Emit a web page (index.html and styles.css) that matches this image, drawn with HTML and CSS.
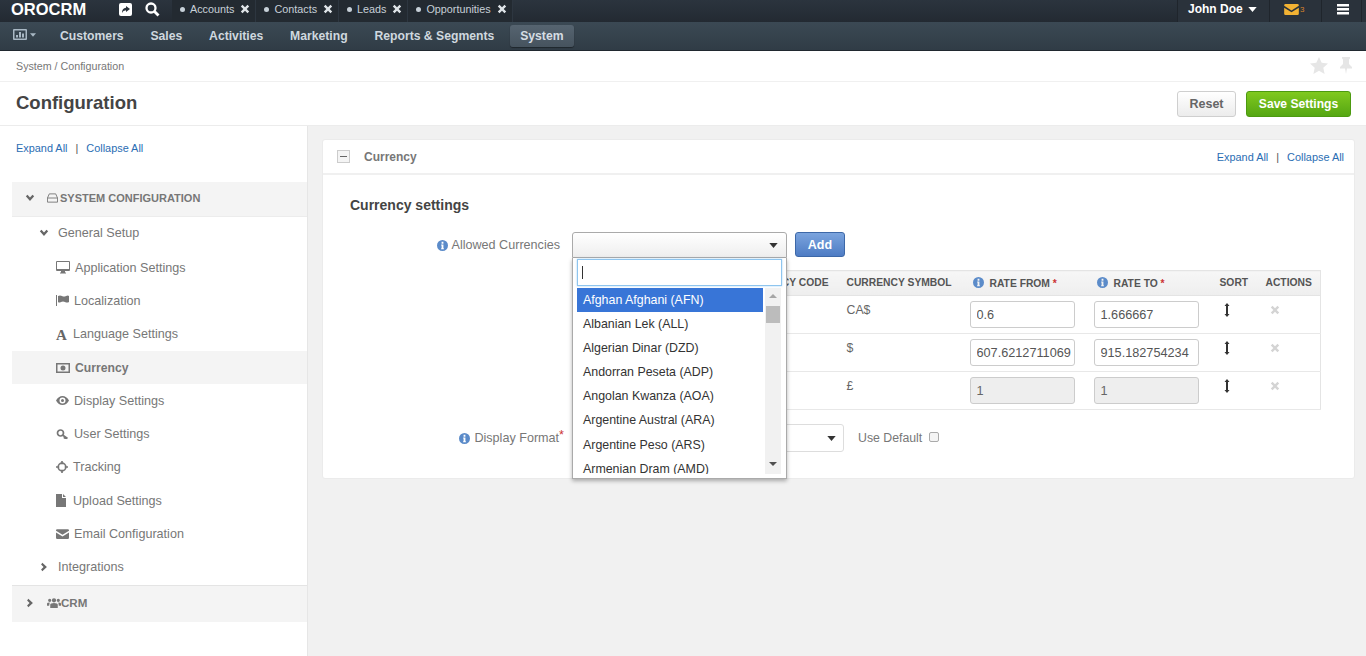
FILE: index.html
```html
<!DOCTYPE html>
<html lang="en">
  <head>
    <meta charset="UTF-8" />
    <meta name="viewport" content="width=device-width, initial-scale=1.0" />
    <title>Configuration</title>
    <link rel="stylesheet" href="styles.css">
  </head>
  <body>
    <svg class="sprite" width="0" height="0">
      <symbol id="i-x" viewBox="0 0 12 12"><path d="M3 1 6 4 9 1 11 3 8 6 11 9 9 11 6 8 3 11 1 9 4 6 1 3Z"/></symbol>
      <symbol id="i-caret" viewBox="0 0 10 6"><path d="M0 0H10L5 6Z"/></symbol>
      <symbol id="i-down" viewBox="0 0 12 12"><path d="M1 4 3 2 6 5.500 9 2 11 4 6 9.500Z"/></symbol>
      <symbol id="i-right" viewBox="0 0 12 12"><path d="M4 1 2.500 3 5.500 6 2.500 9 4 11 9.500 6Z"/></symbol>
      <symbol id="i-envelope" viewBox="0 0 16 12"><path d="M0 1.500Q0 0 1.500 0H14.500Q16 0 16 1.500V2L8 7 0 2ZM0 4 8 9 16 4V10.500Q16 12 14.500 12H1.500Q0 12 0 10.500Z"/></symbol>
      <symbol id="i-info" viewBox="0 0 12 12"><path fill-rule="evenodd" d="M6 0A6 6 0 1 1 6 12 6 6 0 0 1 6 0ZM5 2V4H7V2ZM4.500 5V6H5V9H4.500V10H7.500V9H7V5Z"/></symbol>
      <symbol id="i-sort" viewBox="0 0 6 14"><path d="M3 0 5.500 3H4V11H5.500L3 14 .5 11H2V3H.5Z"/></symbol>
    </svg>

    <header class="topbar">
      <a class="logo">OROCRM</a>
      <div class="quick-icons">
        <svg width="13" height="13" viewBox="0 0 13 13"><path fill="#fff" d="M2 0H11Q13 0 13 2V11Q13 13 11 13H2Q0 13 0 11V2Q0 0 2 0Z"/><path fill="#2a323b" d="M7 3 11 6 7 9V7.300Q4 7.300 3 10 3 5 7 4.700Z"/></svg>
        <svg width="15" height="15" viewBox="0 0 15 15"><circle cx="6" cy="6" r="4.500" fill="none" stroke="#fff" stroke-width="2.300"/><path d="M9.500 9.500 13.500 13.500" stroke="#fff" stroke-width="2.800"/></svg>
      </div>
      <ul class="tabs">
        <li class="tab"><span class="tab-dot"></span>Accounts<svg class="tab-x"><use href="#i-x"/></svg></li>
        <li class="tab"><span class="tab-dot"></span>Contacts<svg class="tab-x"><use href="#i-x"/></svg></li>
        <li class="tab"><span class="tab-dot"></span>Leads<svg class="tab-x"><use href="#i-x"/></svg></li>
        <li class="tab"><span class="tab-dot"></span>Opportunities<svg class="tab-x"><use href="#i-x"/></svg></li>
      </ul>
      <div class="user-area">
        <div class="user-cell user-name">John Doe<svg class="user-caret"><use href="#i-caret"/></svg></div>
        <div class="user-cell user-mail">
          <svg class="mail-icon"><use href="#i-envelope"/></svg><span class="mail-count">3</span>
        </div>
        <div class="user-cell user-menu">
          <svg width="12" height="11" viewBox="0 0 12 11"><path fill="#fff" d="M0 0H12V2.500H0ZM0 4H12V6.500H0ZM0 8H12V10.500H0Z"/></svg>
        </div>
      </div>
    </header>

    <nav class="mainnav">
      <div class="nav-dash">
        <svg width="14" height="11" viewBox="0 0 14 11"><path fill="#a9b8c4" fill-rule="evenodd" d="M1 0H13Q14 0 14 1V10Q14 11 13 11H1Q0 11 0 10V1Q0 0 1 0ZM1.500 1.500V9.500H12.500V1.500ZM3 6H5V8.500H3ZM6 3H8V8.500H6ZM9 4.500H11V8.500H9Z"/></svg>
        <svg class="nav-caret"><use href="#i-caret"/></svg>
      </div>
      <a class="nav-item">Customers</a>
      <a class="nav-item">Sales</a>
      <a class="nav-item">Activities</a>
      <a class="nav-item">Marketing</a>
      <a class="nav-item">Reports &amp; Segments</a>
      <a class="nav-item active">System</a>
    </nav>

    <div class="breadcrumb-bar">
      <div class="breadcrumb">System / Configuration</div>
      <div class="page-tools">
        <svg width="18" height="17" viewBox="0 0 18 17"><path fill="#e6e6e6" d="M9 0 11.700 5.800 18 6.500 13.300 10.800 14.600 17 9 13.800 3.400 17 4.700 10.800 0 6.500 6.300 5.800Z"/></svg>
        <svg width="12" height="17" viewBox="0 0 12 17"><path fill="#e6e6e6" d="M2 0H10V1.500L9 2.500V7L12 10V11.500H7L6 17 5 11.500H0V10L3 7V2.500L2 1.500Z"/></svg>
      </div>
    </div>

    <div class="title-bar">
      <h1 class="page-title">Configuration</h1>
      <div class="title-actions">
        <button class="btn btn-reset">Reset</button>
        <button class="btn btn-save">Save Settings</button>
      </div>
    </div>

    <div class="content">
      <aside class="sidebar">
        <div class="expand-links side-links"><a>Expand All</a><span class="sep">|</span><a>Collapse All</a></div>
        <div class="tree">
          <div class="tree-section open">
            <svg class="chev"><use href="#i-down"/></svg>
            <svg class="sec-icon" viewBox="0 0 12 10"><path fill="none" stroke="#777" d="M2.500 .5H9.500L11.500 5V9.500H.5V5ZM.5 5H11.500"/></svg>
            SYSTEM CONFIGURATION
          </div>
          <div class="tree-group first"><svg class="chev"><use href="#i-down"/></svg>General Setup</div>
          <div class="tree-item">
            <svg class="item-icon" width="14" height="13" viewBox="0 0 14 13"><path fill="#777" fill-rule="evenodd" d="M1 0H13Q14 0 14 1V9Q14 10 13 10H9V11.500H10V12.500H4V11.500H5V10H1Q0 10 0 9V1Q0 0 1 0ZM1 1V8H13V1Z"/></svg>
            Application Settings
          </div>
          <div class="tree-item">
            <svg class="item-icon" width="13" height="11" viewBox="0 0 13 11"><path fill="#777" d="M0 0H1V11H0ZM2 1Q4 0 6 1T10 1 13 1V7Q11 8 9 7T5 7 2 7Z"/></svg>
            Localization
          </div>
          <div class="tree-item">
            <span class="item-letter">A</span>
            Language Settings
          </div>
          <div class="tree-item active">
            <svg class="item-icon" width="14" height="10" viewBox="0 0 14 10"><path fill="#777" fill-rule="evenodd" d="M0 0H14V10H0ZM1.500 1.500V8.500H12.500V1.500ZM7 2.500A2.500 2.500 0 1 1 7 7.500 2.500 2.500 0 0 1 7 2.500Z"/></svg>
            Currency
          </div>
          <div class="tree-item">
            <svg class="item-icon" width="13" height="9" viewBox="0 0 13 9"><path fill="#777" fill-rule="evenodd" d="M6.500 0Q10.500 0 13 4.500 10.500 9 6.500 9T0 4.500Q2.500 0 6.500 0ZM6.500 1.500A3 3 0 1 0 6.500 7.500 3 3 0 0 0 6.500 1.500ZM6.500 3A1.500 1.500 0 1 1 6.500 6 1.500 1.500 0 0 1 6.500 3Z"/></svg>
            Display Settings
          </div>
          <div class="tree-item">
            <svg class="item-icon" width="13" height="11" viewBox="0 0 12 11"><path fill="none" stroke="#777" stroke-width="1.700" d="M4 1A3 3 0 1 1 4 7 3 3 0 0 1 4 1ZM6 6 11 9.500M8.500 7.800 7.500 9.500"/></svg>
            User Settings
          </div>
          <div class="tree-item">
            <svg class="item-icon" width="12" height="12" viewBox="0 0 11 11"><circle cx="5.500" cy="5.500" r="3.500" fill="none" stroke="#777" stroke-width="1.500"/><path stroke="#777" stroke-width="1.500" d="M5.500 0V3M5.500 8V11M0 5.500H3M8 5.500H11"/></svg>
            Tracking
          </div>
          <div class="tree-item">
            <svg class="item-icon file-icon" width="10" height="13" viewBox="0 0 10 13"><path fill="#777" d="M0 0H6V4H10V13H0ZM7 0 10 3H7Z"/></svg>
            Upload Settings
          </div>
          <div class="tree-item">
            <svg class="item-icon" width="13" height="10"><use href="#i-envelope" fill="#777"/></svg>
            Email Configuration
          </div>
          <div class="tree-group last"><svg class="chev"><use href="#i-right"/></svg>Integrations</div>
          <div class="tree-section">
            <svg class="chev"><use href="#i-right"/></svg>
            <svg class="sec-icon crm-icon" viewBox="0 0 13 10"><path fill="#777" d="M6.500 1A2 2 0 1 1 6.500 5 2 2 0 0 1 6.500 1ZM2.500 1.500A1.500 1.500 0 1 1 2.500 4.500 1.500 1.500 0 0 1 2.500 1.500ZM10.500 1.500A1.500 1.500 0 1 1 10.500 4.500 1.500 1.500 0 0 1 10.500 1.500ZM3 10V7Q3 5.500 6.500 5.500T10 7V10ZM0 8V6Q0 5 2.500 5L2 8ZM13 8V6Q13 5 10.500 5L11 8Z"/></svg>
            <span class="crm-label">CRM</span>
          </div>
        </div>
      </aside>

      <main class="main">
        <section class="card">
          <div class="card-head">
            <span class="collapse-box"></span>
            <span class="card-title">Currency</span>
            <div class="expand-links"><a>Expand All</a><span class="sep">|</span><a>Collapse All</a></div>
          </div>
          <div class="card-body">
            <h2 class="form-title">Currency settings</h2>
            <div class="form-row">
              <label class="form-label"><svg class="info"><use href="#i-info"/></svg>Allowed Currencies</label>
              <div class="form-field">
                <div class="picker-line">
                  <div class="select open-select"><svg class="select-caret"><use href="#i-caret"/></svg></div>
                  <button class="btn btn-add">Add</button>
                </div>

                <div class="dropdown">
                  <div class="drop-search"><span class="text-cursor"></span></div>
                  <div class="drop-body">
                    <ul class="drop-list">
                      <li class="selected">Afghan Afghani (AFN)</li>
                      <li>Albanian Lek (ALL)</li>
                      <li>Algerian Dinar (DZD)</li>
                      <li>Andorran Peseta (ADP)</li>
                      <li>Angolan Kwanza (AOA)</li>
                      <li>Argentine Austral (ARA)</li>
                      <li>Argentine Peso (ARS)</li>
                      <li>Armenian Dram (AMD)</li>
                    </ul>
                    <div class="drop-scroll">
                      <span class="scroll-up"></span>
                      <span class="scroll-thumb"></span>
                      <span class="scroll-down"></span>
                    </div>
                  </div>
                </div>

                <table class="rates">
                  <colgroup>
                    <col class="col-code" /><col class="col-symbol" /><col class="col-rate" /><col class="col-rate" /><col class="col-sort" /><col />
                  </colgroup>
                  <thead>
                    <tr>
                      <th class="th-code">CURRENCY CODE</th>
                      <th>CURRENCY SYMBOL</th>
                      <th class="th-rate"><svg class="info"><use href="#i-info"/></svg>RATE FROM <em>*</em></th>
                      <th class="th-rate"><svg class="info"><use href="#i-info"/></svg>RATE TO <em>*</em></th>
                      <th>SORT</th>
                      <th>ACTIONS</th>
                    </tr>
                  </thead>
                  <tbody>
                    <tr>
                      <td></td>
                      <td class="td-text">CA$</td>
                      <td><input class="rate-input" value="0.6" /></td>
                      <td><input class="rate-input" value="1.666667" /></td>
                      <td class="td-text"><svg class="sort-icon"><use href="#i-sort"/></svg></td>
                      <td class="td-text"><svg class="remove-icon"><use href="#i-x"/></svg></td>
                    </tr>
                    <tr>
                      <td></td>
                      <td class="td-text">$</td>
                      <td><input class="rate-input" value="607.6212711069" /></td>
                      <td><input class="rate-input" value="915.182754234" /></td>
                      <td class="td-text"><svg class="sort-icon"><use href="#i-sort"/></svg></td>
                      <td class="td-text"><svg class="remove-icon"><use href="#i-x"/></svg></td>
                    </tr>
                    <tr>
                      <td></td>
                      <td class="td-text">£</td>
                      <td><input class="rate-input" value="1" disabled /></td>
                      <td><input class="rate-input" value="1" disabled /></td>
                      <td class="td-text"><svg class="sort-icon"><use href="#i-sort"/></svg></td>
                      <td class="td-text"><svg class="remove-icon"><use href="#i-x"/></svg></td>
                    </tr>
                  </tbody>
                </table>
              </div>
            </div>
            <div class="form-row format-row">
              <label class="form-label"><svg class="info"><use href="#i-info"/></svg>Display Format<em>*</em></label>
              <div class="form-field format-field">
                <div class="select format-select"><svg class="select-caret"><use href="#i-caret"/></svg></div>
                <span class="use-default">Use Default</span>
                <input type="checkbox" class="use-check" />
              </div>
            </div>
          </div>
        </section>
      </main>
    </div>
  </body>
</html>
```

FILE: styles.css
```css
* {
  box-sizing: border-box;
}
html,
body {
  height: 100%;
}
body {
  font-family: "Liberation Sans", Arial, sans-serif;
  font-size: 12px;
  color: #666;
  margin: 0;
  height: 656px;
  overflow: hidden;
  display: flex;
  flex-direction: column;
  background-color: #fff;
}
.sprite {
  position: absolute;
}
a {
  color: inherit;
  text-decoration: none;
}

/* top bar */
.topbar {
  height: 22px;
  flex: none;
  display: flex;
  align-items: stretch;
  background: linear-gradient(#2b343e, #232a32);
  color: #fff;
}
.logo {
  width: 87px;
  padding-left: 11px;
  font-size: 16.500px;
  font-weight: bold;
  line-height: 18px;
}
.quick-icons {
  width: 85px;
  display: flex;
  align-items: center;
  padding: 0 0 3px 32px;
  gap: 13px;
}
.tabs {
  list-style: none;
  margin: 0;
  padding: 0;
  display: flex;
}
.tab {
  display: flex;
  align-items: center;
  padding: 0 5px 4px 8px;
  font-size: 10.800px;
  color: #c7d0d8;
  background-color: #232a31;
  border-right: 1px solid #2d3640;
}
.tab-dot {
  width: 5px;
  height: 5px;
  margin-right: 5px;
  border-radius: 50%;
  background-color: #c7d0d8;
}
.tab-x {
  width: 10px;
  height: 10px;
  margin-left: 6px;
  fill: #dfe4e8;
}
.user-area {
  margin-left: auto;
  display: flex;
  padding-right: 4px;
  background-color: #2a323b;
}
.user-cell {
  display: flex;
  align-items: center;
  padding-bottom: 4px;
  border-left: 1px solid #1f252c;
}
.user-name {
  width: 92px;
  padding-left: 10px;
  font-weight: bold;
  font-size: 12px;
}
.user-caret {
  width: 9px;
  height: 5px;
  margin-left: 5px;
  fill: #fff;
}
.user-mail {
  width: 52px;
  padding-left: 14px;
}
.mail-icon {
  width: 15px;
  height: 11px;
  fill: #f2b233;
}
.mail-count {
  font-size: 8px;
  color: #d9822b;
  margin-left: 1px;
}
.user-menu {
  width: 41px;
  padding-left: 15px;
  border-right: 1px solid #1f252c;
}

/* main nav */
.mainnav {
  height: 29px;
  flex: none;
  display: flex;
  align-items: center;
  padding-left: 13px;
  background: linear-gradient(#3b4954, #303c46);
  border-bottom: 1px solid #20282f;
}
.nav-dash {
  width: 33.600px;
  display: flex;
  align-items: center;
  padding-bottom: 3px;
}
.nav-caret {
  width: 6px;
  height: 4px;
  margin-left: 3px;
  fill: #a9b8c4;
}
.nav-item {
  padding: 0 13.400px;
  height: 22px;
  line-height: 22px;
  margin-bottom: 1px;
  font-size: 12.200px;
  font-weight: bold;
  color: #cfd8df;
}
.nav-item.active {
  margin-left: 2.500px;
  padding: 0 10px;
  color: #d6dde3;
  border-radius: 3px;
  background: linear-gradient(#566470, #46535e);
  box-shadow: 0 1px 1px #1f262c;
}

/* breadcrumbs and title */
.breadcrumb-bar {
  height: 31px;
  flex: none;
  display: flex;
  justify-content: space-between;
  align-items: center;
  padding: 0 14px 0 16px;
  border-bottom: 1px solid #f0f0f0;
}
.breadcrumb {
  font-size: 10.700px;
  color: #777;
}
.page-tools {
  display: flex;
  gap: 12px;
  padding-bottom: 2px;
}
.title-bar {
  height: 44px;
  flex: none;
  display: flex;
  justify-content: space-between;
  align-items: center;
  padding: 0 15px 0 16px;
  border-bottom: 1px solid #ececec;
}
.page-title {
  margin: 0 0 1px;
  font-size: 18.500px;
  color: #444;
}
.title-actions {
  display: flex;
  gap: 10px;
}
.btn {
  height: 26px;
  font-family: inherit;
  font-size: 12.500px;
  font-weight: bold;
  border-radius: 3px;
  padding: 0;
}
.btn-reset {
  width: 59px;
  color: #666;
  border: 1px solid #cfcfcf;
  background: linear-gradient(#fff, #ececec);
}
.btn-save {
  width: 105px;
  font-size: 12.100px;
  color: #fff;
  border: 1px solid #4c9a10;
  background: linear-gradient(#80c91f, #55a613);
}

/* sidebar */
.content {
  flex: 1;
  display: flex;
  min-height: 0;
}
.sidebar {
  width: 308px;
  flex: none;
  padding-left: 12px;
  border-right: 1px solid #e6e6e6;
  background-color: #fff;
}
.expand-links {
  font-size: 10.900px;
  color: #2a6db3;
}
.side-links {
  height: 56px;
  padding: 16px 0 0 4px;
}
.sep {
  margin: 0 8px;
  color: #555;
}
.tree-section {
  height: 36px;
  display: flex;
  align-items: center;
  padding: 0 0 2px 13px;
  font-weight: bold;
  font-size: 11px;
  color: #777;
  background-color: #f4f4f4;
}
.tree-section.open {
  border-bottom: 1px solid #ececec;
  height: 35px;
}
.tree-section .chev {
  margin-right: 12px;
}
.sec-icon {
  width: 11px;
  height: 10px;
  margin-right: 2px;
}
.crm-icon {
  width: 14px;
  height: 11px;
  margin-right: 0;
}
.crm-label {
  font-size: 11.600px;
}
.chev {
  width: 10px;
  height: 10px;
  flex: none;
  fill: #666;
}
.tree-group {
  display: flex;
  align-items: center;
  padding: 0 0 2px 27px;
  font-size: 12.600px;
  color: #777;
}
.tree-group .chev {
  margin-right: 9px;
}
.tree-group.first {
  height: 34px;
}
.tree-group.last {
  height: 35px;
  border-bottom: 1px solid #e4e4e4;
}
.tree-item {
  height: 33.300px;
  display: flex;
  align-items: center;
  padding-left: 44px;
  font-size: 12.600px;
  color: #777;
}
.tree-item.active {
  font-weight: bold;
  font-size: 12.200px;
  background-color: #f4f4f4;
}
.item-icon {
  margin-right: 5px;
  flex: none;
}
.file-icon {
  margin-right: 7px;
}
.item-letter {
  width: 13px;
  margin-right: 4px;
  padding-top: 3px;
  font-family: "Liberation Serif", serif;
  font-weight: bold;
  font-size: 15px;
  color: #666;
}

/* main panel */
.main {
  flex: 1;
  padding: 13px 11px 0 14px;
  background-color: #f1f1f1;
}
.card {
  height: 340px;
  background-color: #fff;
  border: 1px solid #ebebeb;
  border-radius: 3px;
}
.card-head {
  height: 35px;
  display: flex;
  align-items: center;
  padding: 0 10px 0 14px;
  border-bottom: 2px solid #f0f0f0;
}
.collapse-box {
  width: 13px;
  height: 13px;
  position: relative;
  border: 1px solid #ccc;
  background-color: #f4f4f4;
}
.collapse-box::after {
  content: "";
  position: absolute;
  left: 2px;
  top: 5px;
  width: 7px;
  height: 1px;
  background-color: #666;
}
.card-title {
  margin-left: 14px;
  font-weight: bold;
  color: #777;
}
.card-head .expand-links {
  margin-left: auto;
}
.card-body {
  padding: 22px 0 0 27px;
}
.form-title {
  margin: 0 0 19px;
  font-size: 14px;
  line-height: 16px;
  color: #444;
}
.form-row {
  display: flex;
  align-items: flex-start;
}
.form-label {
  width: 210px;
  flex: none;
  height: 26px;
  margin-right: 12px;
  display: flex;
  justify-content: flex-end;
  align-items: center;
  font-size: 12.600px;
  color: #777;
}
.form-label em {
  font-style: normal;
  color: #c33;
  align-self: flex-start;
  margin: 4px -4px 0 0;
}
.info {
  width: 11px;
  height: 11px;
  margin-right: 4px;
  fill: #5b8bc9;
  flex: none;
}
.form-field {
  position: relative;
  width: 749px;
}
.picker-line {
  display: flex;
  gap: 8px;
  height: 38px;
}
.select {
  height: 26px;
  display: flex;
  justify-content: flex-end;
  align-items: center;
  padding-right: 8px;
  border: 1px solid #aaa;
  border-radius: 3px 3px 0 0;
  background: linear-gradient(#fff, #eee);
}
.open-select {
  width: 215px;
}
.select-caret {
  width: 9px;
  height: 5px;
  fill: #333;
}
.btn-add {
  width: 50px;
  height: 25px;
  color: #fff;
  border: 1px solid #3d68a8;
  background: linear-gradient(#7ba4de, #4e7cc4);
}

/* open dropdown, lies over the table */
.dropdown {
  position: absolute;
  z-index: 5;
  left: 0;
  top: 26px;
  width: 215px;
  height: 221px;
  padding: 1px 4px 0;
  background-color: #fff;
  border: 1px solid #aaa;
  border-top: none;
  box-shadow: 0 2px 4px rgba(0, 0, 0, 0.3);
}
.drop-search {
  height: 27px;
  display: flex;
  align-items: center;
  padding-left: 4px;
  border: 1px solid #8ec5ef;
  box-shadow: 0 0 2px #a9d3f3;
}
.text-cursor {
  width: 1px;
  height: 13px;
  background-color: #333;
}
.drop-body {
  display: flex;
  height: 186px;
  margin-top: 2px;
  overflow: hidden;
}
.drop-list {
  flex: 1;
  list-style: none;
  margin: 0;
  padding: 0;
}
.drop-list li {
  height: 24.100px;
  line-height: 24px;
  padding-left: 6px;
  font-size: 12.400px;
  color: #333;
}
.drop-list li.selected {
  color: #fff;
  background-color: #3875d7;
}
.drop-scroll {
  width: 16px;
  height: 186px;
  margin-left: 2px;
  margin-right: 1px;
  position: relative;
  background-color: #f1f1f1;
}
.scroll-up,
.scroll-down {
  position: absolute;
  left: 4px;
  width: 0;
  height: 0;
  border-left: 4px solid transparent;
  border-right: 4px solid transparent;
}
.scroll-up {
  top: 6px;
  border-bottom: 4px solid #a6a6a6;
}
.scroll-down {
  bottom: 8px;
  border-top: 4px solid #505050;
}
.scroll-thumb {
  position: absolute;
  top: 18px;
  left: 1px;
  width: 14px;
  height: 17px;
  background-color: #bcbcbc;
}

/* rates table */
.rates {
  width: 749px;
  height: 139px;
  table-layout: fixed;
  border-collapse: collapse;
  border: 1px solid #e4e4e4;
  background-color: #fff;
  font-size: 12.300px;
}
.col-code {
  width: 266px;
}
.col-symbol {
  width: 125px;
}
.col-rate {
  width: 124px;
}
.col-sort {
  width: 46px;
}
.rates th {
  height: 25px;
  padding: 0 0 1px 8px;
  text-align: left;
  font-size: 10.300px;
  white-space: nowrap;
  color: #555;
  background: linear-gradient(#f6f6f6, #eee);
  border-bottom: 1px solid #e4e4e4;
}
.rates th em {
  font-style: normal;
  color: #c33;
}
.rates th .info {
  vertical-align: -1px;
  margin-right: 6px;
}
.rates .th-rate {
  padding-left: 9px;
}
.rates .th-code {
  text-align: right;
  padding-right: 10px;
}
.rates td {
  vertical-align: top;
  height: 38px;
  padding: 5px 0 0 8px;
  border-bottom: 1px solid #e8e8e8;
}
.rates .td-text {
  padding-top: 7px;
}
.rate-input {
  width: 105px;
  height: 27px;
  padding: 0 3px 0 6px;
  margin-left: -2px;
  font-family: inherit;
  font-size: 12.700px;
  color: #555;
  background-color: #fff;
  border: 1px solid #ccc;
  border-radius: 3px;
}
.rate-input:disabled {
  color: #666;
  background-color: #eee;
}
.sort-icon {
  width: 6px;
  height: 14px;
  margin-left: 4px;
  fill: #333;
}
.remove-icon {
  width: 10px;
  height: 10px;
  margin: 2px 0 0 4px;
  fill: #d4d4d4;
}

/* display format row */
.format-row {
  margin-top: 14px;
}
.format-row .form-label {
  height: 28px;
}
.format-field {
  display: flex;
  align-items: center;
  height: 28px;
}
.format-select {
  width: 272px;
  height: 28px;
  border-color: #ddd;
  border-radius: 3px;
  background: #fff;
  padding-right: 7px;
}
.use-default {
  margin-left: 14px;
  font-size: 12.300px;
  color: #777;
}
.use-check {
  appearance: none;
  width: 10px;
  height: 10px;
  margin: 0 0 2px 7px;
  background-color: #f4f4f4;
  border: 1px solid #aaa;
  border-radius: 2px;
}
```
